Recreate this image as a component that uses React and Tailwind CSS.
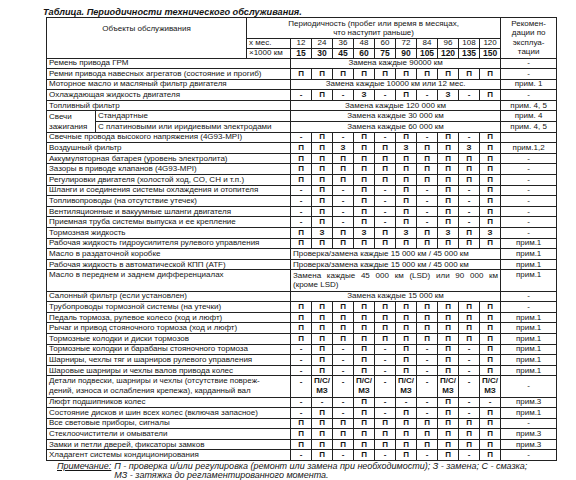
import React from 'react';

const A = ['-', 'П', '-', 'П', '-', 'П', '-', 'П', '-', 'П'];
const ALL = Array(10).fill('П');
const PZ = ['П', 'З', 'П', 'З', 'П', 'З', 'П', 'З', 'П', 'З'];

const B = 'border border-[#222]';
const LAB = `${B} py-0 pl-[2px] pr-0 text-left align-middle leading-none whitespace-nowrap overflow-hidden`;
const VAL = `${B} p-0 text-center align-middle leading-none font-bold`;
const REC = `${B} p-0 text-center align-middle leading-none`;
const SPAN = `${B} p-0 text-center align-middle leading-none`;

const rowsTop = [
  { l: 'Ремень привода ГРМ', s: 'Замена каждые 90000 км', r: '-' },
  { l: 'Ремни привода навесных агрегатов (состояние и прогиб)', v: ALL, r: '-' },
  { l: 'Моторное масло и масляный фильтр двигателя', s: 'Замена каждые 10000 км или 12 мес.', r: 'прим. 1' },
  { l: 'Охлаждающая жидкость двигателя', v: ['-', 'П', '-', 'З', '-', 'П', '-', 'З', '-', 'П'], r: '-' },
  { l: 'Топливный фильтр', s: 'Замена каждые 120 000 км', r: 'прим. 4, 5' },
];

const rowsMid = [
  { l: 'Свечные провода высокого напряжения (4G93-MPI)', v: A, r: '' },
  { l: 'Воздушный фильтр', v: ['П', 'П', 'З', 'П', 'П', 'З', 'П', 'П', 'З', 'П'], r: 'прим.1,2' },
  { l: 'Аккумуляторная батарея (уровень электролита)', v: ALL, r: '-' },
  { l: 'Зазоры в приводе клапанов (4G93-MPI)', v: ALL, r: '-' },
  { l: 'Регулировки двигателя (холостой ход, СО, СН и т.п.)', v: ALL, r: '-' },
  { l: 'Шланги и соединения системы охлаждения и отопителя', v: A, r: '-' },
  { l: 'Топливопроводы (на отсутствие утечек)', v: A, r: '-' },
  { l: 'Вентиляционные и вакуумные шланги двигателя', v: A, r: '-' },
  { l: 'Приемная труба системы выпуска и ее крепление', v: A, r: '-' },
  { l: 'Тормозная жидкость', v: PZ, r: '-' },
  { l: 'Рабочая жидкость гидроусилителя рулевого управления', v: ALL, r: 'прим.1' },
  { l: 'Масло в раздаточной коробке', sl: 'Проверка/замена каждые 15 000 км / 45 000 км', r: 'прим.1' },
  { l: 'Рабочая жидкость в автоматической КПП (ATF)', sl: 'Проверка/замена каждые 15 000 км / 45 000 км', r: 'прим.1' },
];

const rowsLow = [
  { l: 'Салонный фильтр (если установлен)', s: 'Замена каждые 15 000 км', r: '-' },
  { l: 'Трубопроводы тормозной системы (на утечки)', v: ALL, r: '-' },
  { l: 'Педаль тормоза, рулевое колесо (ход и люфт)', v: ALL, r: 'прим.1' },
  { l: 'Рычаг и привод стояночного тормоза (ход и люфт)', v: ALL, r: 'прим.1' },
  { l: 'Тормозные колодки и диски тормозов', v: ALL, r: 'прим.1' },
  { l: 'Тормозные колодки и барабаны стояночного тормоза', v: A, r: 'прим.1' },
  { l: 'Шарниры, чехлы тяг и шарниров рулевого управления', v: A, r: 'прим.1' },
  { l: 'Шаровые шарниры и чехлы валов привода колес', v: A, r: 'прим.1' },
];

const rowsEnd = [
  { l: 'Люфт подшипников колес', v: ['-', '-', '-', 'П', '-', '-', '-', 'П', '-', '-'], r: 'прим.3' },
  { l: 'Состояние дисков и шин всех колес (включая запасное)', v: A, r: 'прим.1' },
  { l: 'Все световые приборы, сигналы', v: ALL, r: '-' },
  { l: 'Стеклоочистители и омыватели', v: ALL, r: 'прим.3' },
  { l: 'Замки и петли дверей, фиксаторы замков', v: ALL, r: 'прим.3' },
  { l: 'Хладагент системы кондиционирования', v: A, r: '-' },
];

function DataRow({ row }) {
  return (
    <tr className="h-[10.6px]">
      <td colSpan={3} className={LAB}>{row.l}</td>
      {row.v && row.v.map((x, i) => (
        <td key={i} className={VAL}>{x}</td>
      ))}
      {row.s && <td colSpan={10} className={SPAN}>{row.s}</td>}
      {row.sl && (
        <td colSpan={10} className={`${B} py-0 pl-[2px] text-left align-middle leading-none whitespace-nowrap`}>{row.sl}</td>
      )}
      <td className={REC}>{row.r}</td>
    </tr>
  );
}

const months = ['12', '24', '36', '48', '60', '72', '84', '96', '108', '120'];
const kms = ['15', '30', '45', '60', '75', '90', '105', '120', '135', '150'];

export default function App() {
  return (
    <div className="w-[576px] h-[480px] overflow-hidden bg-white text-[#151515] font-['Liberation_Sans',Arial,sans-serif]">
      <div className="pl-[43px] pt-[8px] h-[17px] text-[9.2px] leading-[9px] font-bold italic whitespace-nowrap">
        Таблица. Периодичности технического обслуживания.
      </div>
      <table className="ml-[46px] w-[510px] table-fixed border-collapse text-[8px]">
        <colgroup>
          <col className="w-[49px]" />
          <col className="w-[151px]" />
          <col className="w-[44px]" />
          {months.map((m) => (
            <col key={m} className="w-[21px]" />
          ))}
          <col className="w-[56px]" />
        </colgroup>
        <tbody>
          <tr className="h-[21px]">
            <td colSpan={2} rowSpan={3} className={`${B} p-0 pt-[7px] text-center align-top leading-none`}>
              Объекты обслуживания
            </td>
            <td colSpan={11} className={`${B} p-0 text-center align-middle leading-[9px]`}>
              Периодичность (пробег или время в месяцах,
              <br />
              что наступит раньше)
            </td>
            <td rowSpan={3} className={`${B} p-0 text-center align-middle leading-[9.5px]`}>
              Рекомен-
              <br />
              дации по
              <br />
              эксплуа-
              <br />
              тации
            </td>
          </tr>
          <tr className="h-[9.5px]">
            <td className={`${B} py-0 pl-[2px] text-left leading-none`}>х мес.</td>
            {months.map((m) => (
              <td key={m} className={`${B} p-0 text-center leading-none`}>{m}</td>
            ))}
          </tr>
          <tr className="h-[10px]">
            <td className={`${B} py-0 pl-[2px] text-left leading-none whitespace-nowrap`}>×1000 км</td>
            {kms.map((m) => (
              <td key={m} className={`${B} p-0 text-center leading-none font-bold text-[8.5px]`}>{m}</td>
            ))}
          </tr>
          {rowsTop.map((r) => (
            <DataRow key={r.l} row={r} />
          ))}
          <tr className="h-[10.6px]">
            <td rowSpan={2} className={`${B} py-0 pl-[2px] text-left align-middle leading-[10px]`}>
              Свечи
              <br />
              зажигания
            </td>
            <td colSpan={2} className={LAB}>Стандартные</td>
            <td colSpan={10} className={SPAN}>Замена каждые 30 000 км</td>
            <td className={REC}>прим. 4</td>
          </tr>
          <tr className="h-[10.6px]">
            <td colSpan={2} className={LAB}>С платиновыми или иридиевыми электродами</td>
            <td colSpan={10} className={SPAN}>Замена каждые 60 000 км</td>
            <td className={REC}>прим. 4, 5</td>
          </tr>
          {rowsMid.map((r) => (
            <DataRow key={r.l} row={r} />
          ))}
          <tr className="h-[21.2px]">
            <td colSpan={3} className={`${B} py-0 pl-[2px] pt-[1px] text-left align-top leading-none`}>
              Масло в переднем и заднем дифференциалах
            </td>
            <td colSpan={10} className={`${B} py-0 px-[2px] pt-[1px] align-top text-left leading-[9px]`}>
              <div className="flex justify-between">
                <span>Замена</span>
                <span>каждые</span>
                <span>45</span>
                <span>000</span>
                <span>км</span>
                <span>(LSD)</span>
                <span>или</span>
                <span>90</span>
                <span>000</span>
                <span>км</span>
              </div>
              <div>(кроме LSD)</div>
            </td>
            <td className={`${B} p-0 pt-[1px] text-center align-top leading-none`}>прим.1</td>
          </tr>
          {rowsLow.map((r) => (
            <DataRow key={r.l} row={r} />
          ))}
          <tr className="h-[21.2px]">
            <td colSpan={3} className={`${B} py-0 pl-[2px] text-left align-middle leading-[10px] whitespace-nowrap`}>
              Детали подвески, шарниры и чехлы (отсутствие повреж-
              <br />
              дений, износа и ослабления крепежа), карданный вал
            </td>
            {months.map((m, i) =>
              i % 2 === 0 ? (
                <td key={m} className={`${B} p-0 pt-[2px] text-center align-top leading-none font-bold`}>-</td>
              ) : (
                <td key={m} className={`${B} p-0 text-center align-middle leading-[10px] font-bold`}>
                  П/С/
                  <br />
                  МЗ
                </td>
              )
            )}
            <td className={REC}>-</td>
          </tr>
          {rowsEnd.map((r) => (
            <DataRow key={r.l} row={r} />
          ))}
        </tbody>
      </table>
      <div className="flex pl-[57px] pt-[1px] text-[9px] leading-[9px] italic whitespace-nowrap">
        <span className="underline shrink-0">Примечание:</span>
        <span className="pl-[3px]">
          П - проверка и/или регулировка (ремонт или замена при необходимости); З - замена; С - смазка;
          <br />
          МЗ - затяжка до регламентированного момента.
        </span>
      </div>
    </div>
  );
}
